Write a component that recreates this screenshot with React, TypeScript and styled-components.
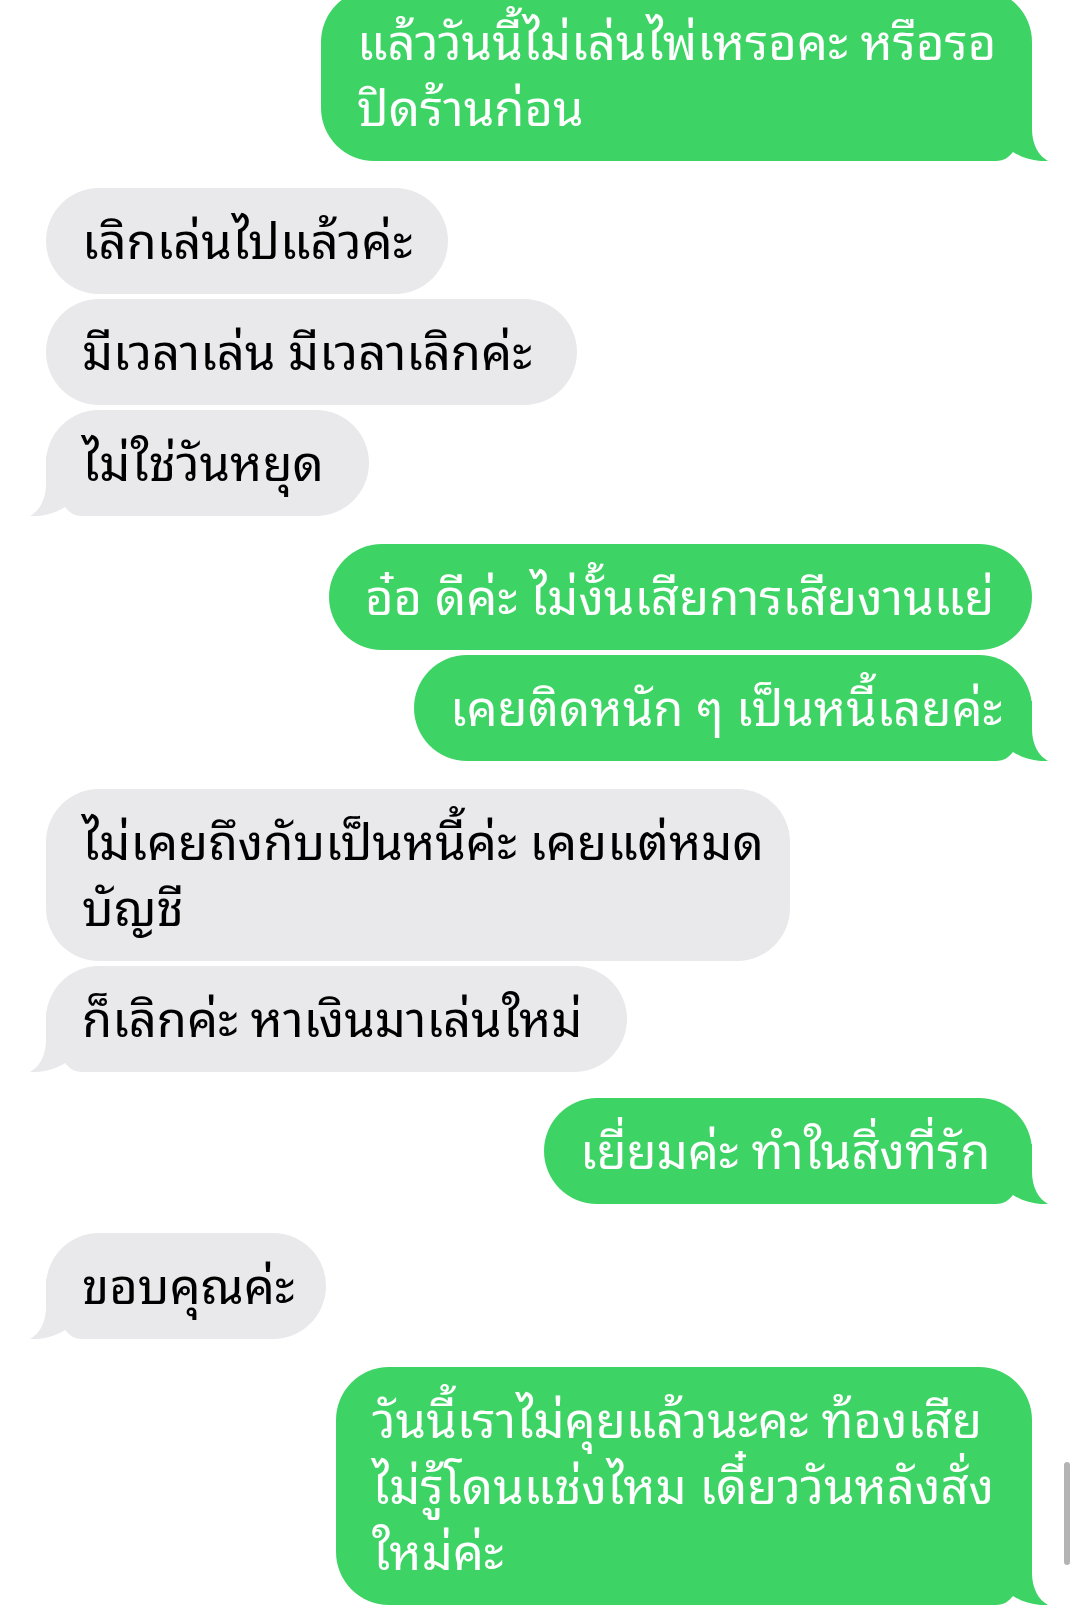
import styled, { createGlobalStyle, css } from "styled-components";

type Side = "me" | "them";

const GlobalStyle = createGlobalStyle`
  html, body {
    margin: 0;
    padding: 0;
    background: #ffffff;
  }
  body {
    width: 1080px;
    height: 1608px;
    overflow: hidden;
    font-family: "Noto Sans Thai Looped", "Noto Serif Thai", "Loma", "Garuda", "Noto Sans Thai", "Noto Sans", sans-serif;
  }
`;

const Screen = styled.div`
  position: relative;
  width: 1080px;
  height: 1608px;
  overflow: hidden;
  background: #ffffff;
`;

const Thread = styled.div`
  display: flex;
  flex-direction: column;
  padding: 0 48px 0 46px;
  margin-top: -11px;
`;

const Group = styled.div<{ $side: Side; $gapAfter: number }>`
  display: flex;
  flex-direction: column;
  align-items: ${(p) => (p.$side === "me" ? "flex-end" : "flex-start")};
  gap: 5px;
  margin-bottom: ${(p) => p.$gapAfter}px;
`;

const Bubble = styled.div<{ $side: Side; $w: number }>`
  position: relative;
  box-sizing: border-box;
  width: ${(p) => p.$w}px;
  padding: 16px 28px 24px 36px;
  border-radius: 53px;
  font-size: 49px;
  white-space: nowrap;
  ${(p) =>
    p.$side === "me"
      ? css`
          background: #3ed465;
          color: #ffffff;
        `
      : css`
          background: #e9e9eb;
          color: #000000;
        `}
`;

const Text = styled.div`
  position: relative;
  z-index: 1;
  display: flex;
  flex-direction: column;
`;

const Line = styled.div`
  height: 66px;
  line-height: 66px;
`;

const Tail = styled.svg<{ $side: Side }>`
  position: absolute;
  bottom: 0;
  z-index: 0;
  width: 74px;
  height: 60px;
  ${(p) =>
    p.$side === "me"
      ? css`
          right: -18px;
          fill: #3ed465;
        `
      : css`
          left: -18px;
          fill: #e9e9eb;
          transform: scaleX(-1);
        `}
`;

const ScrollThumb = styled.div`
  position: absolute;
  top: 1462px;
  right: 10px;
  width: 6px;
  height: 103px;
  border-radius: 3px;
  background: #b4b4b4;
`;

const BubbleTail = ({ side }: { side: Side }) => (
  <Tail $side={side} viewBox="0 0 74 60">
    <path d="M0 0 H56 V28 C56 44 63 55 72 60 C60 61 46 57 37 51 C33 56 28 60 20 60 H0 Z" />
  </Tail>
);

type Msg = { lines: string[]; w: number; tail?: boolean };
type Block = { side: Side; gapAfter: number; msgs: Msg[] };

const conversation: Block[] = [
  {
    side: "me",
    gapAfter: 27,
    msgs: [
      { lines: ["แล้ววันนี้ไม่เล่นไพ่เหรอคะ หรือรอ", "ปิดร้านก่อน"], w: 711, tail: true },
    ],
  },
  {
    side: "them",
    gapAfter: 28,
    msgs: [
      { lines: ["เลิกเล่นไปแล้วค่ะ"], w: 402 },
      { lines: ["มีเวลาเล่น มีเวลาเลิกค่ะ"], w: 531 },
      { lines: ["ไม่ใช่วันหยุด"], w: 323, tail: true },
    ],
  },
  {
    side: "me",
    gapAfter: 28,
    msgs: [
      { lines: ["อ๋อ ดีค่ะ ไม่งั้นเสียการเสียงานแย่"], w: 703 },
      { lines: ["เคยติดหนัก ๆ เป็นหนี้เลยค่ะ"], w: 618, tail: true },
    ],
  },
  {
    side: "them",
    gapAfter: 26,
    msgs: [
      { lines: ["ไม่เคยถึงกับเป็นหนี้ค่ะ เคยแต่หมด", "บัญชี"], w: 744 },
      { lines: ["ก็เลิกค่ะ หาเงินมาเล่นใหม่"], w: 581, tail: true },
    ],
  },
  {
    side: "me",
    gapAfter: 29,
    msgs: [{ lines: ["เยี่ยมค่ะ ทำในสิ่งที่รัก"], w: 488, tail: true }],
  },
  {
    side: "them",
    gapAfter: 28,
    msgs: [{ lines: ["ขอบคุณค่ะ"], w: 280, tail: true }],
  },
  {
    side: "me",
    gapAfter: 0,
    msgs: [
      {
        lines: ["วันนี้เราไม่คุยแล้วนะคะ ท้องเสีย", "ไม่รู้โดนแช่งไหม เดี๋ยววันหลังสั่ง", "ใหม่ค่ะ"],
        w: 696,
        tail: true,
      },
    ],
  },
];

export default function App() {
  return (
    <Screen>
      <GlobalStyle />
      <Thread>
        {conversation.map((block, i) => (
          <Group key={i} $side={block.side} $gapAfter={block.gapAfter}>
            {block.msgs.map((m, j) => (
              <Bubble key={j} $side={block.side} $w={m.w}>
                {m.tail && <BubbleTail side={block.side} />}
                <Text>
                  {m.lines.map((l, k) => (
                    <Line key={k}>{l}</Line>
                  ))}
                </Text>
              </Bubble>
            ))}
          </Group>
        ))}
      </Thread>
      <ScrollThumb />
    </Screen>
  );
}
